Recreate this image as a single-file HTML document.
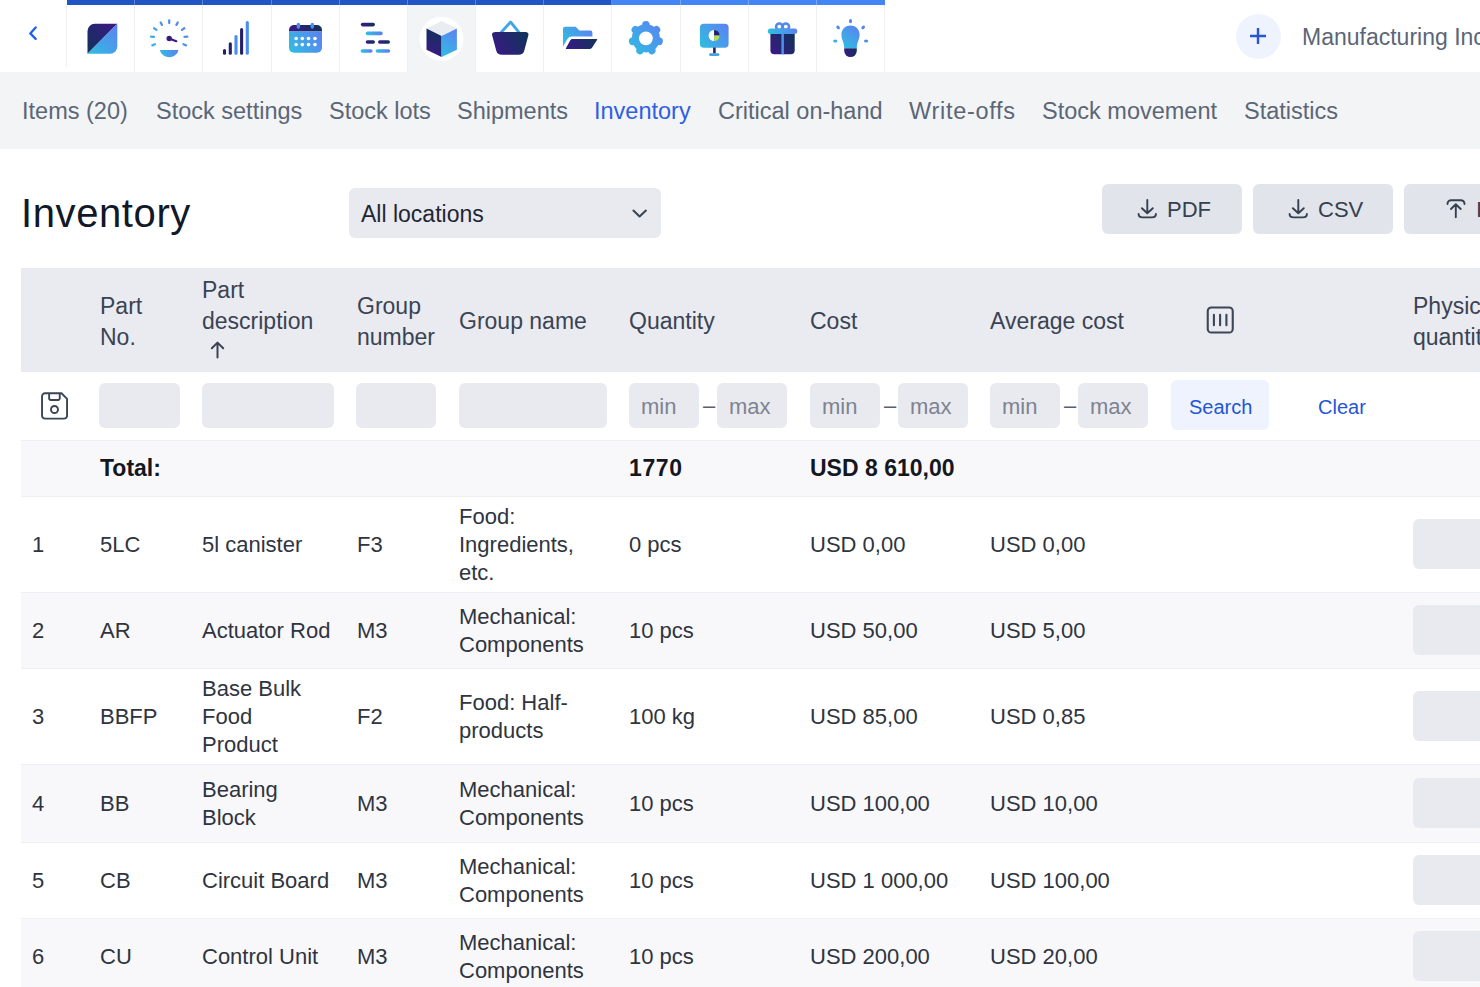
<!DOCTYPE html>
<html><head><meta charset="utf-8">
<style>
*{box-sizing:border-box;margin:0;padding:0}
html,body{width:1480px;height:987px;overflow:hidden;background:#fff}
body{position:relative;font-family:"Liberation Sans",sans-serif;color:#2f3440}
.a{position:absolute;white-space:nowrap}
#hdr{position:absolute;left:0;top:0;width:1480px;height:72px;background:#fff}
.tab{position:absolute;top:0;height:72px;border-right:1px solid #eef0f3}
.tab .bar{position:absolute;left:0;top:0;right:-1px;height:5px;background:#2355c7}
.tab.l .bar{background:#4a8af4}
.tab svg{position:absolute}
#sub{position:absolute;left:0;top:72px;width:1480px;height:77px;background:#f3f4f6}
.nav{position:absolute;top:96px;font-size:23.5px;line-height:30px;color:#5b6676}
.btn{position:absolute;top:184px;height:50px;width:140px;background:#e1e4ea;border-radius:6px}
.btn span{position:absolute;left:65px;top:11px;font-size:22px;line-height:30px;color:#36404f}
.btn svg{position:absolute;left:35px;top:15px}
#th{position:absolute;left:21px;top:268px;width:1470px;height:104px;background:#eaebf0}
.h{position:absolute;font-size:23px;line-height:30.5px;color:#3a4353;white-space:nowrap}
.inp{position:absolute;height:45px;top:383px;background:#e9eaef;border-radius:6px}
.ph{position:absolute;top:393px;font-size:22px;line-height:28px;color:#7d8390}
.dash{position:absolute;top:392px;font-size:22px;line-height:28px;color:#5a606b}
.row{position:absolute;left:21px;width:1470px;border-top:1px solid #eef0f3}
.d{position:absolute;font-size:22px;line-height:28px;color:#2f3440;white-space:nowrap}
.pq{position:absolute;left:1413px;width:100px;height:50px;background:#e9eaef;border-radius:6px}
</style></head><body>
<div id="hdr">
  <svg class="a" style="left:28px;top:26px" width="12" height="15" viewBox="0 0 12 15"><path d="M7.65 1.45L2.3 7.4L7.65 12.85" fill="none" stroke="#1d60f0" stroke-width="2.3" stroke-linecap="round" stroke-linejoin="round"/></svg>
  <div class="tab" style="left:67.00px;width:68.18px"></div>
  <div class="tab" style="left:135.18px;width:68.18px"></div>
  <div class="tab" style="left:203.36px;width:68.18px"></div>
  <div class="tab" style="left:271.54px;width:68.18px"></div>
  <div class="tab" style="left:339.72px;width:68.18px"></div>
  <div class="tab" style="left:407.90px;width:68.18px;background:#f3f4f6"></div>
  <div class="tab" style="left:476.08px;width:68.18px"></div>
  <div class="tab" style="left:544.26px;width:68.18px"></div>
  <div class="tab" style="left:612.44px;width:68.18px"></div>
  <div class="tab" style="left:680.62px;width:68.18px"></div>
  <div class="tab" style="left:748.80px;width:68.18px"></div>
  <div class="tab" style="left:816.98px;width:68.18px"></div>
  <div class="a" style="left:66px;top:5px;width:1px;height:62px;background:#eef0f3"></div>
  <div class="a" style="left:67px;top:0;width:545.44px;height:5px;background:#2255c4"></div>
  <div class="a" style="left:612.44px;top:0;width:272.72px;height:5px;background:#4385f4"></div>
  <div class="a" style="left:134.18px;top:0;width:1px;height:5px;background:rgba(255,255,255,0.28)"></div>
  <div class="a" style="left:202.36px;top:0;width:1px;height:5px;background:rgba(255,255,255,0.28)"></div>
  <div class="a" style="left:270.54px;top:0;width:1px;height:5px;background:rgba(255,255,255,0.28)"></div>
  <div class="a" style="left:338.72px;top:0;width:1px;height:5px;background:rgba(255,255,255,0.28)"></div>
  <div class="a" style="left:406.90px;top:0;width:1px;height:5px;background:rgba(255,255,255,0.28)"></div>
  <div class="a" style="left:475.08px;top:0;width:1px;height:5px;background:rgba(255,255,255,0.28)"></div>
  <div class="a" style="left:543.26px;top:0;width:1px;height:5px;background:rgba(255,255,255,0.28)"></div>
  <div class="a" style="left:611.44px;top:0;width:1px;height:5px;background:rgba(255,255,255,0.28)"></div>
  <div class="a" style="left:679.62px;top:0;width:1px;height:5px;background:rgba(255,255,255,0.28)"></div>
  <div class="a" style="left:747.80px;top:0;width:1px;height:5px;background:rgba(255,255,255,0.28)"></div>
  <div class="a" style="left:815.98px;top:0;width:1px;height:5px;background:rgba(255,255,255,0.28)"></div>
  <!--ICONS-->
<svg class="a" style="left:0;top:0" width="900" height="72" viewBox="0 0 900 72"><defs><linearGradient id="g1" gradientUnits="userSpaceOnUse" x1="87.5" y1="53.8" x2="117.3" y2="23.8"><stop offset="0" stop-color="#0d3457"/><stop offset="1" stop-color="#3d1888"/></linearGradient><linearGradient id="g2" gradientUnits="userSpaceOnUse" x1="87.5" y1="53.8" x2="117.3" y2="23.8"><stop offset="0" stop-color="#2ebfe0"/><stop offset="1" stop-color="#5e7ff3"/></linearGradient><linearGradient id="g3" gradientUnits="userSpaceOnUse" x1="152" y1="57" x2="187" y2="19"><stop offset="0" stop-color="#2ebfe0"/><stop offset="1" stop-color="#5e7ff3"/></linearGradient><linearGradient id="g4" gradientUnits="userSpaceOnUse" x1="159.9" y1="57.2" x2="178.5" y2="49.9"><stop offset="0" stop-color="#2ebfe0"/><stop offset="1" stop-color="#5e7ff3"/></linearGradient><linearGradient id="g5" gradientUnits="userSpaceOnUse" x1="289" y1="31.6" x2="322" y2="25"><stop offset="0" stop-color="#3d1888"/><stop offset="1" stop-color="#0d3457"/></linearGradient><linearGradient id="g6" gradientUnits="userSpaceOnUse" x1="289" y1="52.7" x2="322" y2="31.6"><stop offset="0" stop-color="#2ebfe0"/><stop offset="1" stop-color="#5e7ff3"/></linearGradient><linearGradient id="g7" gradientUnits="userSpaceOnUse" x1="362.6" y1="26.400000000000002" x2="373.2" y2="22.8"><stop offset="0" stop-color="#3d1888"/><stop offset="1" stop-color="#0d3457"/></linearGradient><linearGradient id="g8" gradientUnits="userSpaceOnUse" x1="367.5" y1="35.199999999999996" x2="380.9" y2="31.599999999999998"><stop offset="0" stop-color="#2ebfe0"/><stop offset="1" stop-color="#5e7ff3"/></linearGradient><linearGradient id="g9" gradientUnits="userSpaceOnUse" x1="367.5" y1="43.8" x2="373.2" y2="40.2"><stop offset="0" stop-color="#3d1888"/><stop offset="1" stop-color="#0d3457"/></linearGradient><linearGradient id="g10" gradientUnits="userSpaceOnUse" x1="379.8" y1="43.8" x2="388.2" y2="40.2"><stop offset="0" stop-color="#3d1888"/><stop offset="1" stop-color="#0d3457"/></linearGradient><linearGradient id="g11" gradientUnits="userSpaceOnUse" x1="362.4" y1="52.8" x2="370.8" y2="49.2"><stop offset="0" stop-color="#2ebfe0"/><stop offset="1" stop-color="#5e7ff3"/></linearGradient><linearGradient id="g12" gradientUnits="userSpaceOnUse" x1="377.4" y1="52.8" x2="388.4" y2="49.2"><stop offset="0" stop-color="#2ebfe0"/><stop offset="1" stop-color="#5e7ff3"/></linearGradient><linearGradient id="g13" gradientUnits="userSpaceOnUse" x1="426.5" y1="56.9" x2="441.6" y2="28.4"><stop offset="0" stop-color="#3d1888"/><stop offset="1" stop-color="#0d3457"/></linearGradient><linearGradient id="g14" gradientUnits="userSpaceOnUse" x1="441.6" y1="56.9" x2="456.9" y2="28.4"><stop offset="0" stop-color="#2ebfe0"/><stop offset="1" stop-color="#5e7ff3"/></linearGradient><linearGradient id="g15" gradientUnits="userSpaceOnUse" x1="492.5" y1="54.8" x2="528.5" y2="32"><stop offset="0" stop-color="#3d1888"/><stop offset="1" stop-color="#0d3457"/></linearGradient><linearGradient id="g16" gradientUnits="userSpaceOnUse" x1="563" y1="46" x2="592.4" y2="26.7"><stop offset="0" stop-color="#2ebfe0"/><stop offset="1" stop-color="#5e7ff3"/></linearGradient><linearGradient id="g17" gradientUnits="userSpaceOnUse" x1="564.8" y1="49.5" x2="598.1" y2="38.5"><stop offset="0" stop-color="#3d1888"/><stop offset="1" stop-color="#0d3457"/></linearGradient><linearGradient id="g18" gradientUnits="userSpaceOnUse" x1="629" y1="55" x2="663" y2="21"><stop offset="0" stop-color="#2ebfe0"/><stop offset="1" stop-color="#5e7ff3"/></linearGradient><linearGradient id="g19" gradientUnits="userSpaceOnUse" x1="699.9" y1="47.7" x2="728.6" y2="23.8"><stop offset="0" stop-color="#2ebfe0"/><stop offset="1" stop-color="#5e7ff3"/></linearGradient><linearGradient id="g20" gradientUnits="userSpaceOnUse" x1="770.4" y1="54.2" x2="794.7" y2="33.9"><stop offset="0" stop-color="#3d1888"/><stop offset="1" stop-color="#0d3457"/></linearGradient><linearGradient id="g21" gradientUnits="userSpaceOnUse" x1="768" y1="33.9" x2="797.2" y2="28.6"><stop offset="0" stop-color="#2ebfe0"/><stop offset="1" stop-color="#5e7ff3"/></linearGradient><linearGradient id="g22" gradientUnits="userSpaceOnUse" x1="841.4" y1="47.7" x2="859.6" y2="25.4"><stop offset="0" stop-color="#2ebfe0"/><stop offset="1" stop-color="#5e7ff3"/></linearGradient><linearGradient id="g23" gradientUnits="userSpaceOnUse" x1="844.2" y1="57" x2="856.8" y2="48"><stop offset="0" stop-color="#3d1888"/><stop offset="1" stop-color="#0d3457"/></linearGradient></defs><path d="M87.5 53.8V31A7.2 7.2 0 0 1 94.7 23.8H117.3Z" fill="url(#g1)"/><path d="M87.5 53.8L117.3 23.8V46.6A7.2 7.2 0 0 1 110.1 53.8Z" fill="url(#g2)"/><line x1="169.20" y1="23.10" x2="169.20" y2="20.30" stroke="url(#g3)" stroke-width="2.3" stroke-linecap="round"/><line x1="176.43" y1="24.90" x2="177.74" y2="22.43" stroke="url(#g3)" stroke-width="2.3" stroke-linecap="round"/><line x1="181.97" y1="29.89" x2="184.29" y2="28.32" stroke="url(#g3)" stroke-width="2.3" stroke-linecap="round"/><line x1="184.52" y1="36.89" x2="187.30" y2="36.60" stroke="url(#g3)" stroke-width="2.3" stroke-linecap="round"/><line x1="183.48" y1="44.27" x2="186.07" y2="45.32" stroke="url(#g3)" stroke-width="2.3" stroke-linecap="round"/><line x1="161.97" y1="24.90" x2="160.66" y2="22.43" stroke="url(#g3)" stroke-width="2.3" stroke-linecap="round"/><line x1="156.43" y1="29.89" x2="154.11" y2="28.32" stroke="url(#g3)" stroke-width="2.3" stroke-linecap="round"/><line x1="153.88" y1="36.89" x2="151.10" y2="36.60" stroke="url(#g3)" stroke-width="2.3" stroke-linecap="round"/><line x1="154.92" y1="44.27" x2="152.33" y2="45.32" stroke="url(#g3)" stroke-width="2.3" stroke-linecap="round"/><circle cx="169.2" cy="38.5" r="2.7" fill="#3a1a7e"/><line x1="169.2" y1="38.5" x2="176.3" y2="41.2" stroke="#3a1a7e" stroke-width="2.2" stroke-linecap="round"/><path d="M159.9 50.6Q159.9 49.9 160.6 49.9H177.8Q178.5 49.9 178.5 50.6C177 55 173 57.2 169.2 57.2C165.4 57.2 161.4 55 159.9 50.6Z" fill="url(#g4)"/><line x1="224.5" y1="50.55" x2="224.5" y2="53.15" stroke="#24216a" stroke-width="3.1" stroke-linecap="round"/><line x1="230.3" y1="43.75" x2="230.3" y2="53.15" stroke="#24216a" stroke-width="3.1" stroke-linecap="round"/><line x1="236" y1="36.45" x2="236" y2="53.15" stroke="#4a8fe9" stroke-width="3.1" stroke-linecap="round"/><line x1="241.6" y1="29.55" x2="241.6" y2="53.15" stroke="#24216a" stroke-width="3.1" stroke-linecap="round"/><line x1="247.3" y1="22.55" x2="247.3" y2="53.15" stroke="#4a8fe9" stroke-width="3.1" stroke-linecap="round"/><path d="M289 31.6V30.1A5 5 0 0 1 294 25.1H317A5 5 0 0 1 322 30.1V31.6Z" fill="url(#g5)"/><path d="M289 31.6H322V47.7A5 5 0 0 1 317 52.7H294A5 5 0 0 1 289 47.7Z" fill="url(#g6)"/><line x1="298.4" y1="24.5" x2="298.4" y2="27" stroke="#4a90e8" stroke-width="3.4" stroke-linecap="round"/><line x1="312.3" y1="24.5" x2="312.3" y2="27" stroke="#4a90e8" stroke-width="3.4" stroke-linecap="round"/><circle cx="296.1" cy="38.5" r="1.8" fill="#fff"/><circle cx="302.3" cy="38.5" r="1.8" fill="#fff"/><circle cx="308.5" cy="38.5" r="1.8" fill="#fff"/><circle cx="315" cy="38.5" r="1.8" fill="#fff"/><circle cx="296.1" cy="44.6" r="1.8" fill="#fff"/><circle cx="302.3" cy="44.6" r="1.8" fill="#fff"/><circle cx="308.5" cy="44.6" r="1.8" fill="#fff"/><circle cx="315" cy="44.6" r="1.8" fill="#fff"/><line x1="362.6" y1="24.6" x2="373.2" y2="24.6" stroke="url(#g7)" stroke-width="3.6" stroke-linecap="round"/><line x1="367.5" y1="33.4" x2="380.9" y2="33.4" stroke="url(#g8)" stroke-width="3.6" stroke-linecap="round"/><line x1="367.5" y1="42" x2="373.2" y2="42" stroke="url(#g9)" stroke-width="3.6" stroke-linecap="round"/><line x1="379.8" y1="42" x2="388.2" y2="42" stroke="url(#g10)" stroke-width="3.6" stroke-linecap="round"/><line x1="362.4" y1="51" x2="370.8" y2="51" stroke="url(#g11)" stroke-width="3.6" stroke-linecap="round"/><line x1="377.4" y1="51" x2="388.4" y2="51" stroke="url(#g12)" stroke-width="3.6" stroke-linecap="round"/><circle cx="441.5" cy="38.8" r="22" fill="#fff"/><path d="M441.6 21L456.9 28.4L441.6 36L426.5 28.4Z" fill="#e9edf1"/><path d="M426.5 28.4L441.6 36V56.9L426.5 49.7Z" fill="url(#g13)"/><path d="M441.6 36L456.9 28.4V49.7L441.6 56.9Z" fill="url(#g14)"/><path d="M500.8 32.8L510.6 22L519.4 32.8" fill="none" stroke="#3ea6e9" stroke-width="2.8" stroke-linejoin="round"/><path d="M495.5 32H525.5C528 32 528.9 33.5 528.3 35.6L524.3 50.4C523.6 53.3 521.6 54.8 518.6 54.8H501.9C498.9 54.8 496.9 53.3 496.2 50.4L492.2 35.6C491.6 33.5 492.5 32 495.5 32Z" fill="url(#g15)"/><path d="M563 28.7Q563 26.7 565 26.7H575.7L579.3 30.6H590.4Q592.4 30.6 592.4 32.6V36.5H571.5Q569 36.5 567.8 38.6L563 46.5Z" fill="url(#g16)"/><path d="M572.5 38.3H596.5Q598.8 38.3 597.6 40.3L592.6 48.2Q591.8 49.6 590 49.6H566.3Q564.3 49.6 565.3 47.8L569.7 40Q570.6 38.3 572.5 38.3Z" fill="url(#g17)" stroke="#fff" stroke-width="1.4"/><circle cx="645.9" cy="38.3" r="14.1" fill="url(#g18)"/><line x1="645.9" y1="38.3" x2="645.90" y2="24.80" stroke="url(#g18)" stroke-width="7.6" stroke-linecap="round"/><line x1="645.9" y1="38.3" x2="656.45" y2="29.88" stroke="url(#g18)" stroke-width="7.6" stroke-linecap="round"/><line x1="645.9" y1="38.3" x2="659.06" y2="41.30" stroke="url(#g18)" stroke-width="7.6" stroke-linecap="round"/><line x1="645.9" y1="38.3" x2="651.76" y2="50.46" stroke="url(#g18)" stroke-width="7.6" stroke-linecap="round"/><line x1="645.9" y1="38.3" x2="640.04" y2="50.46" stroke="url(#g18)" stroke-width="7.6" stroke-linecap="round"/><line x1="645.9" y1="38.3" x2="632.74" y2="41.30" stroke="url(#g18)" stroke-width="7.6" stroke-linecap="round"/><line x1="645.9" y1="38.3" x2="635.35" y2="29.88" stroke="url(#g18)" stroke-width="7.6" stroke-linecap="round"/><circle cx="645.9" cy="38.3" r="6.9" fill="#fff"/><rect x="699.9" y="23.8" width="28.7" height="23.9" rx="4" fill="url(#g19)"/><path d="M714.1 30A5.5 5.5 0 0 0 714.1 41Z" fill="#fff"/><path d="M714.1 35.5V30A5.5 5.5 0 0 1 719.6 35.5Z" fill="#27206e"/><path d="M714.1 35.5H719.6A5.5 5.5 0 0 1 714.1 41Z" fill="#b3dc55"/><line x1="714.4" y1="47.5" x2="714.4" y2="53.5" stroke="#27206e" stroke-width="2.6"/><line x1="710.4" y1="54.6" x2="718" y2="54.6" stroke="#43a3e6" stroke-width="2.8" stroke-linecap="round"/><path d="M770.4 33.9H794.7V50.2A4 4 0 0 1 790.7 54.2H774.4A4 4 0 0 1 770.4 50.2Z" fill="url(#g20)"/><rect x="781.4" y="33.9" width="2.5" height="20.3" fill="#4a93e8"/><circle cx="779.3" cy="26.7" r="3.2" fill="none" stroke="#5287ec" stroke-width="2.6"/><circle cx="785.8" cy="26.7" r="3.2" fill="none" stroke="#5287ec" stroke-width="2.6"/><line x1="770.5" y1="31.25" x2="794.6" y2="31.25" stroke="url(#g21)" stroke-width="5.3" stroke-linecap="round"/><path d="M850.5 25.4C856 25.4 859.6 29.5 859.6 34.7C859.6 39.5 856.8 42 856.8 47.9H844.2C844.2 42 841.4 39.5 841.4 34.7C841.4 29.5 845 25.4 850.5 25.4Z" fill="url(#g22)"/><path d="M844.2 48.2H856.8V50.8A6.3 6.3 0 0 1 844.2 50.8Z" fill="url(#g23)"/><ellipse cx="850.5" cy="21.2" rx="1.5" ry="2.1" fill="#4c88ec" transform="rotate(0 850.5 21.2)"/><ellipse cx="838.1" cy="27.4" rx="1.5" ry="2.1" fill="#4c8fea" transform="rotate(-45 838.1 27.4)"/><ellipse cx="863.2" cy="27.4" rx="1.5" ry="2.1" fill="#5585ee" transform="rotate(45 863.2 27.4)"/><ellipse cx="835.3" cy="41" rx="2.1" ry="1.5" fill="#38b0e3" transform="rotate(0 835.3 41)"/><ellipse cx="866.1" cy="41" rx="2.1" ry="1.5" fill="#4a90e8" transform="rotate(0 866.1 41)"/></svg>
<!--/ICONS-->
  <div class="a" style="left:1235.5px;top:14px;width:45px;height:45px;border-radius:50%;background:#eef3fd"></div>
  <svg class="a" style="left:1249px;top:27px" width="18" height="18" viewBox="0 0 18 18"><path d="M9 1V17M1 9H17" stroke="#2456d6" stroke-width="2.4"/></svg>
  <div class="a" style="left:1302px;top:22px;font-size:23px;line-height:30px;color:#5b6676">Manufacturing Inc</div>
</div>
<div id="sub"></div>
<div class="nav" style="left:22px">Items (20)</div>
<div class="nav" style="left:156px">Stock settings</div>
<div class="nav" style="left:329px">Stock lots</div>
<div class="nav" style="left:457px">Shipments</div>
<div class="nav" style="left:594px;color:#2f5fe3">Inventory</div>
<div class="nav" style="left:718px">Critical on-hand</div>
<div class="nav" style="left:909px;letter-spacing:0.7px">Write-offs</div>
<div class="nav" style="left:1042px">Stock movement</div>
<div class="nav" style="left:1244px">Statistics</div>

<div class="a" style="left:21px;top:189px;font-size:40px;line-height:48px;letter-spacing:0.6px;color:#111827">Inventory</div>
<div class="a" style="left:349px;top:188px;width:312px;height:50px;background:#e9eaef;border-radius:6px"></div>
<div class="a" style="left:361px;top:199px;font-size:23px;line-height:30px;color:#1f2633">All locations</div>
<svg class="a" style="left:631px;top:208px" width="17" height="11" viewBox="0 0 17 11"><path d="M2.4 2.6L8.6 8.5L14.9 2.6" fill="none" stroke="#3a4556" stroke-width="2.1" stroke-linecap="round" stroke-linejoin="round"/></svg>

<div class="btn" style="left:1102px"><svg style="left:34px;top:13px" width="24" height="24" viewBox="0 0 24 24"><path d="M11.3 3V15.6M5.9 11.2L11.3 16.3L16.8 11.2M2.6 17C2.6 19.4 4 20.4 6.5 20.4H16C18.5 20.4 19.9 19.4 19.9 17" fill="none" stroke="#36404f" stroke-width="1.9" stroke-linecap="round" stroke-linejoin="round"/></svg><span>PDF</span></div>
<div class="btn" style="left:1253px"><svg style="left:34px;top:13px" width="24" height="24" viewBox="0 0 24 24"><path d="M11.3 3V15.6M5.9 11.2L11.3 16.3L16.8 11.2M2.6 17C2.6 19.4 4 20.4 6.5 20.4H16C18.5 20.4 19.9 19.4 19.9 17" fill="none" stroke="#36404f" stroke-width="1.9" stroke-linecap="round" stroke-linejoin="round"/></svg><span>CSV</span></div>
<div class="btn" style="left:1404px"><svg style="left:42px;top:15px" width="22" height="22" viewBox="0 0 22 22"><path d="M1.5 5C1.5 2.3 3 1.2 5.5 1.2H14.5C17 1.2 18.5 2.3 18.5 5M9.8 5.5V18.2M5 10L9.8 5.2L14.7 10" fill="none" stroke="#36404f" stroke-width="1.9" stroke-linecap="round" stroke-linejoin="round"/></svg><span style="left:72px">Import</span></div>

<div id="th"></div>
<div class="h" style="left:100px;top:291px">Part<br>No.</div>
<div class="h" style="left:202px;top:275px">Part<br>description</div>
<svg class="a" style="left:209px;top:340px" width="17" height="19" viewBox="0 0 17 19"><path d="M8.5 3V17.5M2.8 8.3L8.5 2.6L14.2 8.3" fill="none" stroke="#3a4353" stroke-width="2" stroke-linecap="round" stroke-linejoin="round"/></svg>
<div class="h" style="left:357px;top:291px">Group<br>number</div>
<div class="h" style="left:459px;top:306px">Group name</div>
<div class="h" style="left:629px;top:306px">Quantity</div>
<div class="h" style="left:810px;top:306px">Cost</div>
<div class="h" style="left:990px;top:306px">Average cost</div>
<svg class="a" style="left:1205px;top:305px" width="30" height="30" viewBox="0 0 30 30"><rect x="2.75" y="2.55" width="25" height="25" rx="3.6" fill="none" stroke="#3b4658" stroke-width="2.1"/><path d="M8.9 9.85V20.25M15.1 9.85V20.25M21.4 9.85V20.25" stroke="#3b4658" stroke-width="2.1" stroke-linecap="round"/></svg>
<div class="h" style="left:1413px;top:291px">Physical<br>quantity</div>

<!-- filter row -->
<svg class="a" style="left:40px;top:391px" width="30" height="30" viewBox="0 0 30 30"><path d="M5.05 2.25H21.5L27.05 7.8V24.65A3 3 0 0 1 24.05 27.65H5.05A3 3 0 0 1 2.05 24.65V5.25A3 3 0 0 1 5.05 2.25Z" fill="none" stroke="#3a4556" stroke-width="1.9" stroke-linejoin="round"/><path d="M9.15 2.25V7.3A1.75 1.75 0 0 0 10.9 9.05H18A1.75 1.75 0 0 0 19.75 7.3V2.25" fill="none" stroke="#3a4556" stroke-width="1.9"/><circle cx="14.5" cy="18.5" r="3.5" fill="none" stroke="#3a4556" stroke-width="1.9"/></svg>
<div class="inp" style="left:99px;width:81px"></div>
<div class="inp" style="left:202px;width:132px"></div>
<div class="inp" style="left:356px;width:80px"></div>
<div class="inp" style="left:459px;width:148px"></div>
<div class="inp" style="left:629px;width:70px"></div><div class="ph" style="left:641px">min</div>
<div class="dash" style="left:703px">–</div>
<div class="inp" style="left:717px;width:70px"></div><div class="ph" style="left:729px">max</div>
<div class="inp" style="left:810px;width:70px"></div><div class="ph" style="left:822px">min</div>
<div class="dash" style="left:884px">–</div>
<div class="inp" style="left:898px;width:70px"></div><div class="ph" style="left:910px">max</div>
<div class="inp" style="left:990px;width:70px"></div><div class="ph" style="left:1002px">min</div>
<div class="dash" style="left:1064px">–</div>
<div class="inp" style="left:1078px;width:70px"></div><div class="ph" style="left:1090px">max</div>
<div class="a" style="left:1171px;top:380px;width:98px;height:50px;background:#eef3fd;border-radius:6px"></div>
<div class="a" style="left:1189px;top:393px;font-size:20px;line-height:28px;color:#2456d6">Search</div>
<div class="a" style="left:1318px;top:393px;font-size:20px;line-height:28px;color:#2456d6">Clear</div>

<!-- total row -->
<div class="row" style="top:440px;height:56px;background:#f8f8fa"></div>
<div class="d" style="left:100px;top:454px;font-size:23px;font-weight:bold;color:#14171f">Total:</div>
<div class="d" style="left:629px;top:454px;font-size:23px;font-weight:bold;letter-spacing:0.6px;color:#14171f">1770</div>
<div class="d" style="left:810px;top:454px;font-size:23px;font-weight:bold;color:#14171f">USD 8 610,00</div>

<!-- rows -->
<div class="row" style="top:496px;height:96px;background:#fff"></div>
<div class="row" style="top:592px;height:76px;background:#f8f8fa"></div>
<div class="row" style="top:668px;height:96px;background:#fff"></div>
<div class="row" style="top:764px;height:78px;background:#f8f8fa"></div>
<div class="row" style="top:842px;height:76px;background:#fff"></div>
<div class="row" style="top:918px;height:80px;background:#f8f8fa"></div>
<div class="row" style="top:998px;height:80px;background:#fff"></div>

<!--DATA-->
<div class="d" style="left:32px;top:531px">1</div>
<div class="d" style="left:100px;top:531px">5LC</div>
<div class="d" style="left:202px;top:531px">5l canister</div>
<div class="d" style="left:357px;top:531px">F3</div>
<div class="d" style="left:459px;top:503px">Food:<br>Ingredients,<br>etc.</div>
<div class="d" style="left:629px;top:531px">0 pcs</div>
<div class="d" style="left:810px;top:531px">USD 0,00</div>
<div class="d" style="left:990px;top:531px">USD 0,00</div>
<div class="pq" style="top:519px"></div>
<div class="d" style="left:32px;top:617px">2</div>
<div class="d" style="left:100px;top:617px">AR</div>
<div class="d" style="left:202px;top:617px">Actuator Rod</div>
<div class="d" style="left:357px;top:617px">M3</div>
<div class="d" style="left:459px;top:603px">Mechanical:<br>Components</div>
<div class="d" style="left:629px;top:617px">10 pcs</div>
<div class="d" style="left:810px;top:617px">USD 50,00</div>
<div class="d" style="left:990px;top:617px">USD 5,00</div>
<div class="pq" style="top:605px"></div>
<div class="d" style="left:32px;top:703px">3</div>
<div class="d" style="left:100px;top:703px">BBFP</div>
<div class="d" style="left:202px;top:675px">Base Bulk<br>Food<br>Product</div>
<div class="d" style="left:357px;top:703px">F2</div>
<div class="d" style="left:459px;top:689px">Food: Half-<br>products</div>
<div class="d" style="left:629px;top:703px">100 kg</div>
<div class="d" style="left:810px;top:703px">USD 85,00</div>
<div class="d" style="left:990px;top:703px">USD 0,85</div>
<div class="pq" style="top:691px"></div>
<div class="d" style="left:32px;top:790px">4</div>
<div class="d" style="left:100px;top:790px">BB</div>
<div class="d" style="left:202px;top:776px">Bearing<br>Block</div>
<div class="d" style="left:357px;top:790px">M3</div>
<div class="d" style="left:459px;top:776px">Mechanical:<br>Components</div>
<div class="d" style="left:629px;top:790px">10 pcs</div>
<div class="d" style="left:810px;top:790px">USD 100,00</div>
<div class="d" style="left:990px;top:790px">USD 10,00</div>
<div class="pq" style="top:778px"></div>
<div class="d" style="left:32px;top:867px">5</div>
<div class="d" style="left:100px;top:867px">CB</div>
<div class="d" style="left:202px;top:867px">Circuit Board</div>
<div class="d" style="left:357px;top:867px">M3</div>
<div class="d" style="left:459px;top:853px">Mechanical:<br>Components</div>
<div class="d" style="left:629px;top:867px">10 pcs</div>
<div class="d" style="left:810px;top:867px">USD 1 000,00</div>
<div class="d" style="left:990px;top:867px">USD 100,00</div>
<div class="pq" style="top:855px"></div>
<div class="d" style="left:32px;top:943px">6</div>
<div class="d" style="left:100px;top:943px">CU</div>
<div class="d" style="left:202px;top:943px">Control Unit</div>
<div class="d" style="left:357px;top:943px">M3</div>
<div class="d" style="left:459px;top:929px">Mechanical:<br>Components</div>
<div class="d" style="left:629px;top:943px">10 pcs</div>
<div class="d" style="left:810px;top:943px">USD 200,00</div>
<div class="d" style="left:990px;top:943px">USD 20,00</div>
<div class="pq" style="top:931px"></div>
<!--/DATA-->
</body></html>
